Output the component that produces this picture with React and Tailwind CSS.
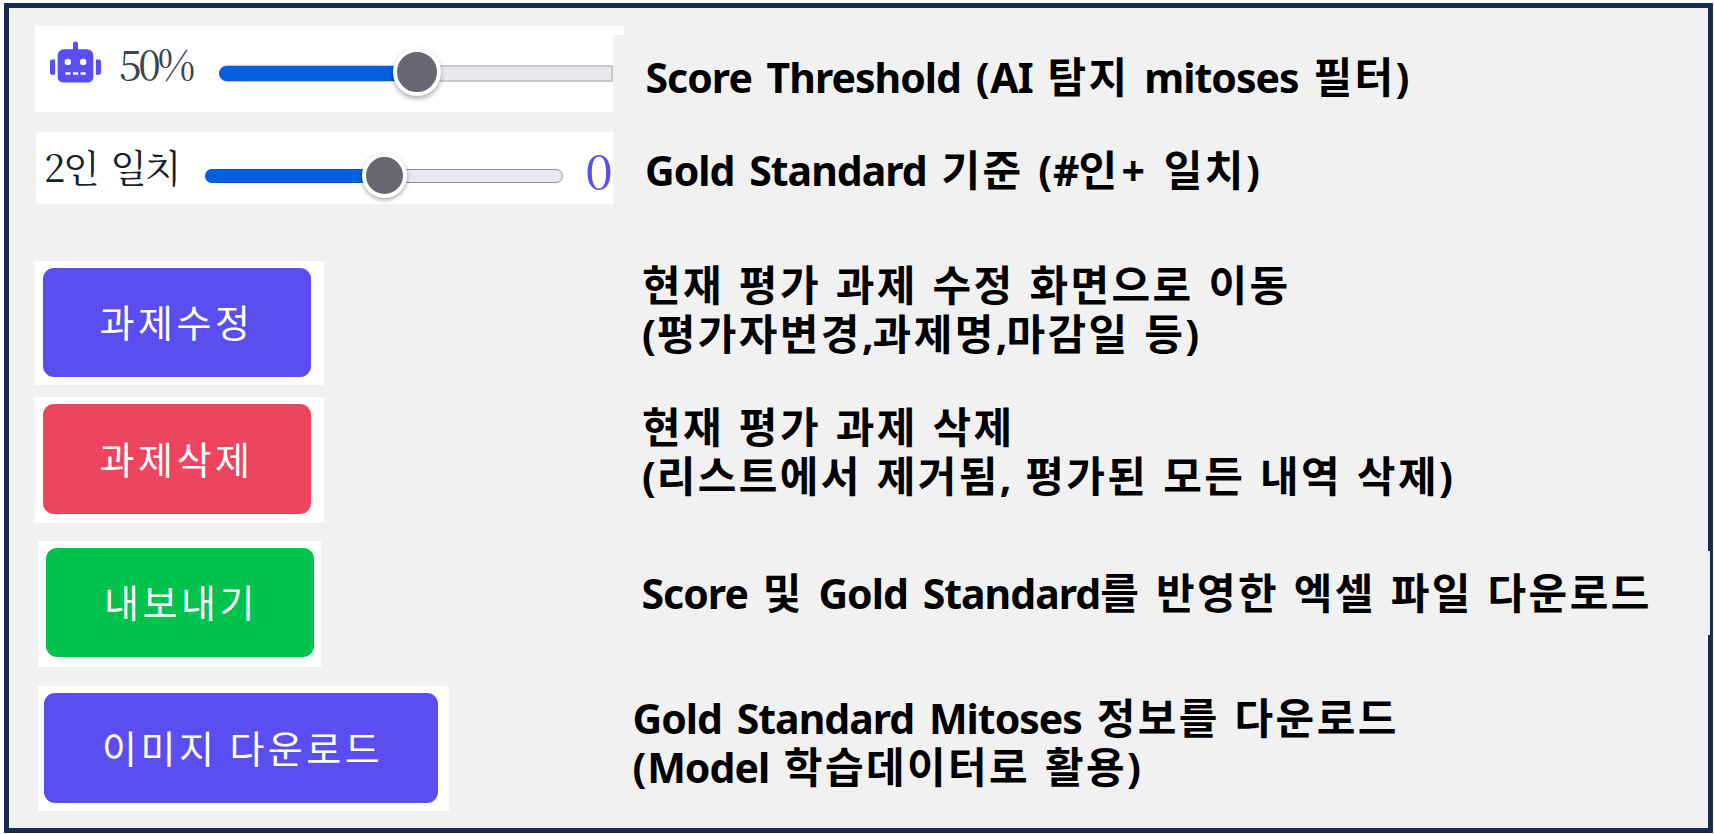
import { FaRobot } from "react-icons/fa";

function Line({ children }) {
  const runs = children.split(/([가-힣]+|\+|\()/).filter(Boolean);
  return (
    <div className="h-[49px] whitespace-pre leading-[49px]">
      {runs.map((run, i) => {
        if (run === "+") {
          return (
            <span key={i} className="ml-[2px] tracking-[4px]">
              +
            </span>
          );
        }
        if (run === "(") {
          return (
            <span key={i} className="tracking-[0.8px]">
              (
            </span>
          );
        }
        return /[가-힣]/.test(run) ? (
          <span key={i} className="font-['Noto_Sans_CJK_KR',sans-serif] text-[42px] leading-[0] tracking-[2.4px]">
            {run}
          </span>
        ) : (
          <span key={i} className="tracking-[-1px] [word-spacing:5.1px]">
            {run}
          </span>
        );
      })}
    </div>
  );
}

function Row({ className, left, label, lines }) {
  return (
    <div className={"flex items-start " + className}>
      <div className="flex h-full w-[640px] shrink-0 items-start">{left}</div>
      <div className={"font-['Noto_Sans','Noto_Sans_CJK_KR',sans-serif] text-[41px] font-bold text-black " + label}>
        {lines.map((line) => (
          <Line key={line}>{line}</Line>
        ))}
      </div>
    </div>
  );
}

function ActionButton({ frame, className, children }) {
  return (
    <div className={"flex h-full items-start bg-white " + frame}>
      <button
        className={
          "flex items-center justify-start rounded-[11px] pb-[3px] whitespace-pre font-['Noto_Sans_CJK_KR',sans-serif] text-[38px] leading-none tracking-[3.5px] text-white " +
          className
        }
      >
        {children}
      </button>
    </div>
  );
}

export default function App() {
  return (
    <div className="h-[834px] w-[1714px] overflow-hidden bg-white pt-[3px] pl-1">
      <main className="relative h-[830px] w-[1709px] border-5 border-[#182c52] bg-[#f1f1f1] pt-[18px]">
        <Row
          className="h-[86px]"
          label="-ml-[3.5px] pt-[27px]"
          lines={["Score Threshold (AI 탐지 mitoses 필터)"]}
          left={
            <div className="relative ml-[26px] flex h-full w-[578px] items-start bg-white">
              <FaRobot className="mt-[15px] ml-[15px] h-[42px] w-[51px] shrink-0 text-[#5a4ef3]" />
              <span className="mt-[13px] ml-[18px] w-[81px] shrink-0 font-['Noto_Serif_CJK_KR','Liberation_Serif',serif] text-[41px] leading-[48px] tracking-[-3.3px] whitespace-nowrap text-[#3a4550]">
                50%
              </span>
              <div className="relative mt-[39px] ml-[19px] h-[17px] w-[394px] shrink-0 rounded-l-full rounded-r-md border-2 border-[#c8c8d0] bg-[#e9e9ed]">
                <div className="-mt-[1px] -ml-[2px] h-[15px] w-[200px] rounded-l-full bg-[#0060df]" />
                <div className="absolute -top-[19px] left-[172px] size-[48px] rounded-full border-[4.5px] border-white bg-[#676774] shadow-[0_3px_5px_rgba(0,0,0,0.3)]" />
              </div>
              <div className="absolute top-0 left-[578px] h-[9px] w-[11px] bg-white" />
            </div>
          }
        />
        <Row
          className="mt-5 h-[72px]"
          label="-ml-1 pt-[14px]"
          lines={["Gold Standard 기준 (#인+ 일치)"]}
          left={
            <div className="ml-[27px] flex h-full w-[577px] items-start bg-white">
              <span className="mt-[10px] ml-[8px] w-[144px] shrink-0 font-['Noto_Serif_CJK_KR',serif] text-[38px] leading-[48px] tracking-[-2.3px] whitespace-nowrap text-[#14222e] [word-spacing:5.5px]">
                2인 일치
              </span>
              <div className="relative mt-[37px] ml-[16.5px] h-[14px] w-[358px] shrink-0 rounded-full border border-[#8f8f9d] bg-[#e9e9ed]">
                <div className="-mt-px -ml-px h-[14px] w-[180px] rounded-l-full bg-[#0060df]" />
                <div className="absolute -top-[17px] left-[156px] size-[45px] rounded-full border-[4.5px] border-white bg-[#676774] shadow-[0_2px_4px_rgba(0,0,0,0.35)]" />
              </div>
              <span className="mt-[10px] ml-[22.5px] shrink-0 origin-left scale-x-108 font-['Noto_Serif_CJK_KR','Liberation_Serif',serif] text-[47px] leading-[54px] text-[#5a4ef3]">
                0
              </span>
            </div>
          }
        />
        <Row
          className="mt-[57px] h-[124px]"
          label="-ml-[7px]"
          lines={["현재 평가 과제 수정 화면으로 이동", "(평가자변경,과제명,마감일 등)"]}
          left={
            <ActionButton frame="ml-[26px] w-[289px] pt-[7px] pl-[7.5px]" className="h-[109px] w-[268px] bg-[#5a4ef3] pl-[57px]">
              과제수정
            </ActionButton>
          }
        />
        <Row
          className="mt-3 h-[126px]"
          label="-ml-[7px] pt-[6px]"
          lines={["현재 평가 과제 삭제", "(리스트에서 제거됨, 평가된 모든 내역 삭제)"]}
          left={
            <ActionButton frame="ml-[26px] w-[289px] pt-[7px] pl-[7.5px]" className="h-[110px] w-[268px] bg-[#ee455e] pl-[57px]">
              과제삭제
            </ActionButton>
          }
        />
        <Row
          className="mt-[18px] h-[126px]"
          label="-ml-[7.5px] pt-[28px]"
          lines={["Score 및 Gold Standard를 반영한 엑셀 파일 다운로드"]}
          left={
            <ActionButton frame="ml-[29px] w-[283px] pt-[7px] pl-[7.5px]" className="h-[109px] w-[268px] bg-[#00c24c] pl-[58.5px]">
              내보내기
            </ActionButton>
          }
        />
        <Row
          className="mt-[19px] h-[125px]"
          label="-ml-[16.5px] pt-[8px]"
          lines={["Gold Standard Mitoses 정보를 다운로드", "(Model 학습데이터로 활용)"]}
          left={
            <ActionButton frame="ml-[29px] w-[411px] pt-[7px] pl-[6px]" className="h-[110px] w-[394px] bg-[#5a4ef3] pl-[58px]">
              이미지 다운로드
            </ActionButton>
          }
        />
        <div className="absolute top-[543px] -right-[2px] h-[84px] w-[2px] bg-[#f1f1f1]" />
      </main>
    </div>
  );
}
